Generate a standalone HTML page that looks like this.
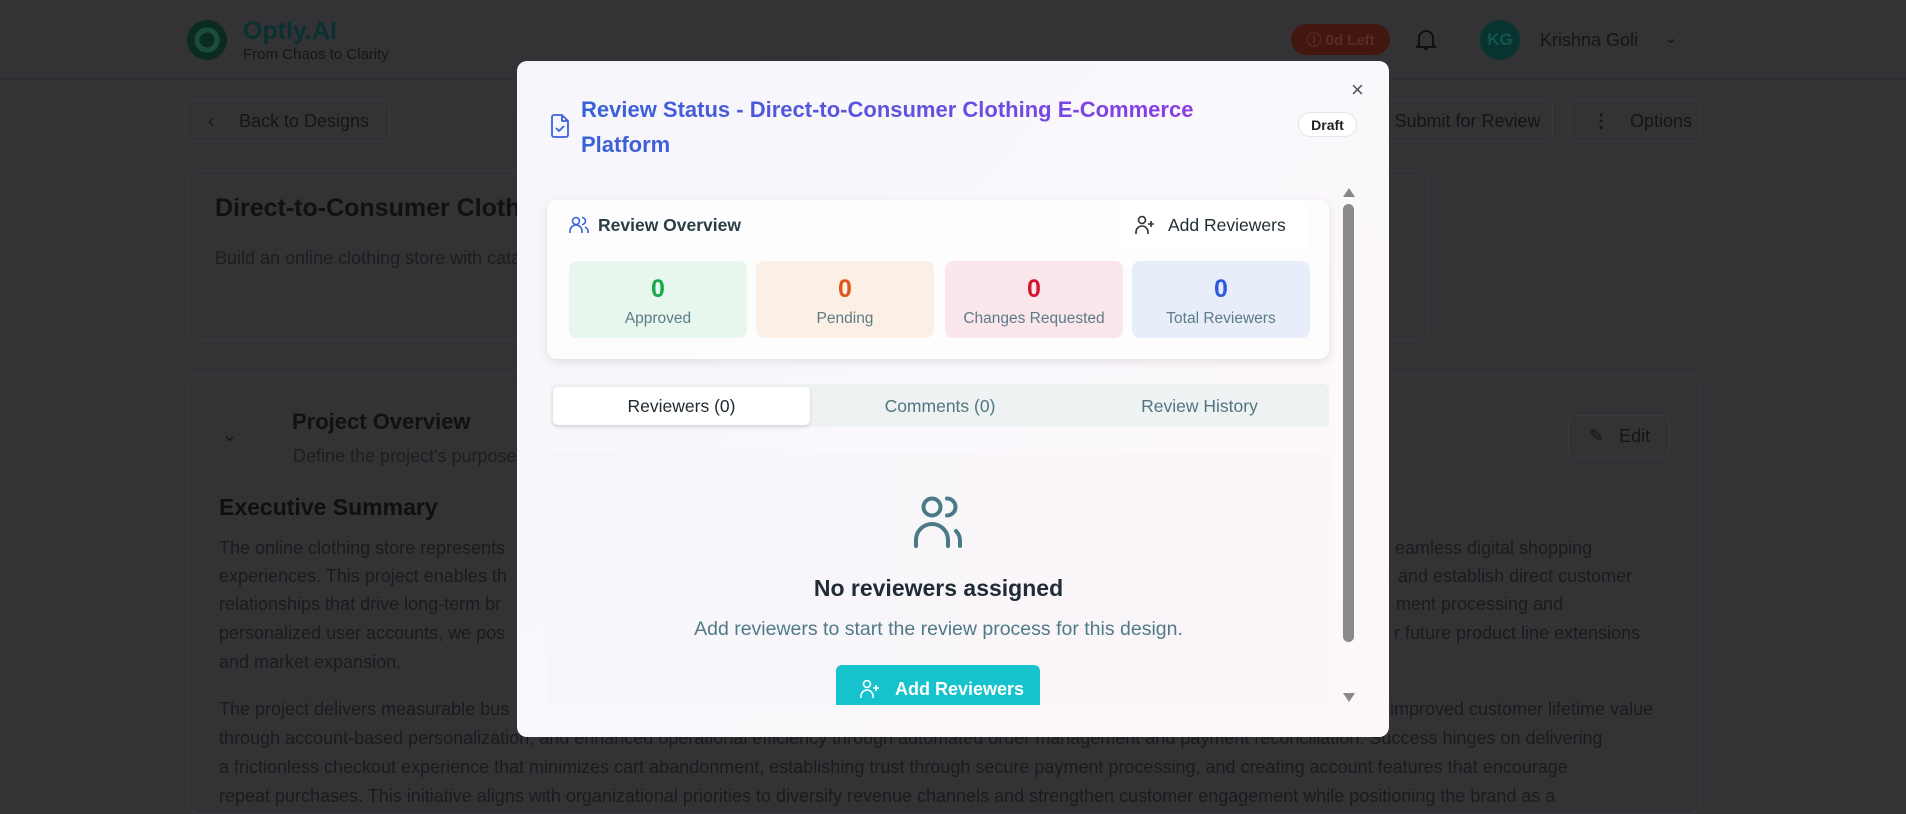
<!DOCTYPE html>
<html><head><meta charset="utf-8"><style>
*{box-sizing:border-box;margin:0;padding:0}
body{width:1906px;height:798px;overflow:hidden;background:#333235;font-family:"Liberation Sans",sans-serif;position:relative;color:#141416}
.abs{position:absolute}
.hdr{left:0;top:0;width:1906px;height:80px;border-bottom:1px solid #2d2c30}
.btn{position:absolute;border:1px solid #3b3a3e;border-radius:7px;color:#151517;font-size:18px;display:flex;align-items:center}
.card{position:absolute;border:1px solid #3a393d;border-radius:10px}
.p{position:absolute;font-size:18px;color:#1b1b1e;white-space:nowrap}
.modal{left:517px;top:61px;width:872px;height:676px;border-radius:10px;background:linear-gradient(135deg,#f5f6fc 0%,#fbf8fc 60%,#fdf7fa 100%);overflow:hidden}
.stat{position:absolute;top:200px;height:77px;width:178px;border-radius:8px;text-align:center}
.stat b{display:block;font-size:25px;margin-top:14px}
.stat span{display:block;font-size:15.5px;color:#5c7c86;margin-top:6px}
</style></head><body>
<div class="abs hdr"></div>
<svg class="abs" style="left:186px;top:19px" width="42" height="42"><circle cx="21" cy="21" r="20" fill="#0a2a22"/><circle cx="21" cy="21" r="10" fill="none" stroke="#1b4d3e" stroke-width="5"/></svg>
<div class="abs" style="left:243px;top:17px;font-size:25px;font-weight:bold;color:#0c3030">Optly.AI</div>
<div class="abs" style="left:243px;top:46px;font-size:15px;color:#161618">From Chaos to Clarity</div>
<div class="abs" style="left:1291px;top:24px;width:99px;height:31px;border-radius:16px;background:#42170f;color:#5a2d22;font-size:15px;font-weight:bold;display:flex;align-items:center;justify-content:center">ⓘ&nbsp;0d Left</div>
<svg class="abs" style="left:1415px;top:28px" width="22" height="24" fill="none" stroke="#0d0d0e" stroke-width="1.8"><path d="M4 17V10a7 7 0 0 1 14 0v7l2 2H2z M9 21h4"/></svg>
<div class="abs" style="left:1480px;top:20px;width:40px;height:40px;border-radius:50%;background:#083430;color:#0f5550;font-size:17px;font-weight:bold;display:flex;align-items:center;justify-content:center">KG</div>
<div class="abs" style="left:1540px;top:30px;font-size:18px;color:#151517">Krishna Goli</div>
<div class="abs" style="left:1664px;top:28px;font-size:16px;color:#151517">⌄</div>

<div class="btn" style="left:185px;top:100px;width:205px;height:42px;padding-left:22px">‹&nbsp;&nbsp;&nbsp;&nbsp;&nbsp;Back to Designs</div>
<div class="btn" style="left:1360px;top:100px;width:193px;height:42px;justify-content:center;padding-left:22px">Submit for Review</div>
<div class="btn" style="left:1569px;top:100px;width:132px;height:42px;padding-left:22px"><b>⋮</b>&nbsp;&nbsp;&nbsp;&nbsp;Options</div>

<div class="card" style="left:188px;top:170px;width:1240px;height:170px"></div>
<div class="abs" style="left:215px;top:194px;font-size:25px;font-weight:bold;color:#111113">Direct-to-Consumer Clothing E-Commerce Platform</div>
<div class="abs" style="left:215px;top:248px;font-size:18px;color:#1d1d20">Build an online clothing store with catalog, cart and checkout</div>

<div class="card" style="left:188px;top:374px;width:1512px;height:440px"></div>
<div class="abs" style="left:222px;top:425px;font-size:18px;color:#151517">⌄</div>
<div class="abs" style="left:292px;top:409px;font-size:22px;font-weight:bold;color:#111113">Project Overview</div>
<div class="abs" style="left:293px;top:446px;font-size:18px;color:#1e1e21">Define the project's purpose and goals</div>
<div class="btn" style="left:1568px;top:415px;width:102px;height:43px;padding-left:20px">✎&nbsp;&nbsp;&nbsp;Edit</div>
<div class="abs" style="left:219px;top:494px;font-size:23px;font-weight:bold;color:#0f0f11">Executive Summary</div>
<div class="p" style="left:219px;top:538px">The online clothing store represents</div>
<div class="p" style="left:219px;top:566px">experiences. This project enables th</div>
<div class="p" style="left:219px;top:594px">relationships that drive long-term br</div>
<div class="p" style="left:219px;top:623px">personalized user accounts, we pos</div>
<div class="p" style="left:219px;top:652px">and market expansion.</div>
<div class="p" style="left:219px;top:699px">The project delivers measurable bus</div>
<div class="p" style="left:1395px;top:538px">eamless digital shopping</div>
<div class="p" style="left:1398px;top:566px">and establish direct customer</div>
<div class="p" style="left:1396px;top:594px">ment processing and</div>
<div class="p" style="left:1394px;top:623px">r future product line extensions</div>
<div class="p" style="left:1390px;top:699px">improved customer lifetime value</div>
<div class="p" style="left:219px;top:728px">through account-based personalization, and enhanced operational efficiency through automated order management and payment reconciliation. Success hinges on delivering</div>
<div class="p" style="left:219px;top:757px">a frictionless checkout experience that minimizes cart abandonment, establishing trust through secure payment processing, and creating account features that encourage</div>
<div class="p" style="left:219px;top:786px">repeat purchases. This initiative aligns with organizational priorities to diversify revenue channels and strengthen customer engagement while positioning the brand as a</div>

<div class="abs modal">
 <svg class="abs" style="left:33px;top:53px" width="20" height="24" fill="none" stroke="#3b63d9" stroke-width="1.8" stroke-linejoin="round"><path d="M2 3a2 2 0 0 1 2-2h8l6 6v14a2 2 0 0 1-2 2H4a2 2 0 0 1-2-2z M12 1v6h6 M6 14l3 3 5-5"/></svg>
 <div class="abs" style="left:64px;top:31px;width:660px;font-size:22px;font-weight:bold;line-height:35px;background:linear-gradient(90deg,#3762d6,#6a4ee0 60%,#9238e6);-webkit-background-clip:text;background-clip:text;color:transparent">Review Status - Direct-to-Consumer Clothing E-Commerce Platform</div>
 <div class="abs" style="left:834px;top:16px;font-size:22px;color:#555">×</div>
 <div class="abs" style="left:781px;top:51px;width:59px;height:25px;border:1px solid #e5e5ea;border-radius:13px;background:#fff;font-size:14px;font-weight:bold;color:#222;display:flex;align-items:center;justify-content:center">Draft</div>

 <div class="abs" style="left:30px;top:139px;width:782px;height:159px;background:rgba(255,255,255,.75);border-radius:10px;box-shadow:0 3px 10px rgba(0,0,0,.1)"></div>
 <svg class="abs" style="left:52px;top:155px" width="20" height="18" fill="none" stroke="#3b63d9" stroke-width="1.6"><circle cx="7" cy="5" r="3.5"/><path d="M1 17v-2a5 5 0 0 1 12 0v2 M13 1.5a3.5 3.5 0 0 1 0 7 M16 11a5 5 0 0 1 3 5v1"/></svg>
 <div class="abs" style="left:81px;top:154px;font-size:17.5px;font-weight:bold;color:#2c3d45">Review Overview</div>
 <div class="abs" style="left:601px;top:139px;width:191px;height:49px;border-radius:8px;background:rgba(255,255,255,.8)"></div>
 <svg class="abs" style="left:617px;top:154px" width="22" height="20" fill="none" stroke="#333" stroke-width="1.6"><circle cx="8" cy="5" r="3.5"/><path d="M2 19v-2a6 6 0 0 1 12 0v2 M17 6v6 M14 9h6"/></svg>
 <div class="abs" style="left:651px;top:154px;font-size:17.5px;color:#1f2d33">Add Reviewers</div>
 <div class="stat" style="left:52px;background:#e7f7ee"><b style="color:#19a84a">0</b><span>Approved</span></div>
 <div class="stat" style="left:239px;background:#fcefe5"><b style="color:#e0561a">0</b><span>Pending</span></div>
 <div class="stat" style="left:428px;background:#fbe6ec"><b style="color:#d3182e">0</b><span>Changes Requested</span></div>
 <div class="stat" style="left:615px;background:#e8edfa"><b style="color:#2f5ae0">0</b><span>Total Reviewers</span></div>

 <div class="abs" style="left:34px;top:323px;width:778px;height:43px;background:#eef2f3;border-radius:6px"></div>
 <div class="abs" style="left:36px;top:326px;width:257px;height:38px;background:#fff;border-radius:5px;box-shadow:0 2px 4px rgba(0,0,0,.12)"></div>
 <div class="abs" style="left:36px;top:335px;width:257px;text-align:center;font-size:17.5px;color:#1f2a30">Reviewers (0)</div>
 <div class="abs" style="left:293px;top:335px;width:260px;text-align:center;font-size:17.5px;color:#4f7680">Comments (0)</div>
 <div class="abs" style="left:553px;top:335px;width:259px;text-align:center;font-size:17.5px;color:#4f7680">Review History</div>

 <div class="abs" style="left:29px;top:392px;width:785px;height:252px;background:linear-gradient(90deg,#f6f6fa,#fcf5f9);border-radius:8px 8px 0 0;overflow:hidden">
  <svg class="abs" style="left:364px;top:40px" width="56" height="56" fill="none" stroke="#4a7a86" stroke-width="4" stroke-linecap="round"><circle cx="22" cy="14" r="8.5"/><path d="M6 53v-6a16 16 0 0 1 32 0v6 M37 5.5a8.5 8.5 0 0 1 0 17 M46 38a14 14 0 0 1 4 9v6"/></svg>
  <div class="abs" style="left:0;top:122px;width:785px;text-align:center;font-size:23px;font-weight:bold;color:#1f2c35">No reviewers assigned</div>
  <div class="abs" style="left:0;top:165px;width:785px;text-align:center;font-size:19.5px;color:#4f7b86">Add reviewers to start the review process for this design.</div>
  <div class="abs" style="left:290px;top:212px;width:204px;height:50px;background:#16c2cb;border-radius:6px"></div>
  <svg class="abs" style="left:313px;top:226px" width="22" height="20" fill="none" stroke="#fff" stroke-width="1.6"><circle cx="8" cy="5" r="3.5"/><path d="M2 19v-2a6 6 0 0 1 12 0v2 M17 6v6 M14 9h6"/></svg>
  <div class="abs" style="left:349px;top:226px;font-size:18px;font-weight:bold;color:#fff">Add Reviewers</div>
 </div>

 <div class="abs" style="left:826px;top:127px;width:0;height:0;border-left:6px solid transparent;border-right:6px solid transparent;border-bottom:9px solid #888"></div>
 <div class="abs" style="left:826px;top:143px;width:11px;height:438px;background:#8a8a8c;border-radius:6px"></div>
 <div class="abs" style="left:826px;top:632px;width:0;height:0;border-left:6px solid transparent;border-right:6px solid transparent;border-top:9px solid #888"></div>
</div>
</body></html>
